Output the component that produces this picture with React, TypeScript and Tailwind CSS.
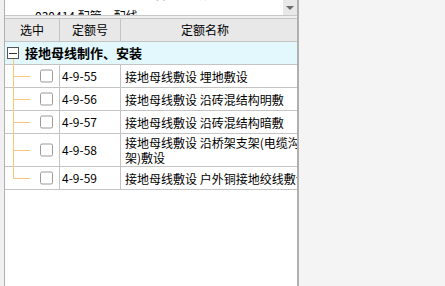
import React from "react";

const rows = [
  { code: "4-9-55", name: ["接地母线敷设 埋地敷设"] },
  { code: "4-9-56", name: ["接地母线敷设 沿砖混结构明敷"] },
  { code: "4-9-57", name: ["接地母线敷设 沿砖混结构暗敷"] },
  { code: "4-9-58", name: ["接地母线敷设 沿桥架支架(电缆沟", "架)敷设"] },
  { code: "4-9-59", name: ["接地母线敷设 户外铜接地绞线敷设"] },
];

function TreeCell({ last }: { last: boolean }) {
  return (
    <div className="relative w-[55px] shrink-0 border-r border-[#c4c4c4]">
      <div
        className={`absolute left-[8px] top-0 w-px bg-[#fcc77a] ${last ? "h-1/2" : "h-[calc(100%+1px)]"}`}
      />
      <div className="absolute left-[8px] top-1/2 h-px w-[17px] bg-[#fcc77a]" />
      <div className="absolute left-[35px] top-1/2 h-[13px] w-[13px] -translate-y-1/2 rounded-[2px] border border-[#9a9a9a] bg-white" />
    </div>
  );
}

export default function App() {
  return (
    <div
      className="flex h-[286px] w-[445px] overflow-hidden bg-[#f4f4f4] text-black"
      style={{ fontFamily: '"Noto Sans CJK SC", "Noto Sans", sans-serif' }}
    >
      <div className="w-[4px] shrink-0 bg-[#f0f0f0]" />
      <div className="flex w-[295px] shrink-0 flex-col border-l border-r-2 border-[#b0b0b0] bg-white">
        {/* tree view above, scrolled */}
        <div className="flex h-[16px] shrink-0 border-b border-[#c8c8c8]">
          <div className="relative flex-1 overflow-hidden text-[12px] leading-[14px]">
            <div className="absolute left-[92px] top-[-13px] font-bold">030400 配管配线安装</div>
            <div className="absolute left-[22px] top-[9px] flex gap-[4px]">
              <span className="text-[8px] text-[#888]">▸</span>
              <span>030414 配管、配线</span>
            </div>
          </div>
          <div className="flex w-[14px] items-center justify-center bg-[#e8e8e8]">
            <div className="h-0 w-0 border-x-[4px] border-t-[4px] border-x-transparent border-t-[#6b6b6b]" />
          </div>
        </div>
        <div className="h-[2px] shrink-0 bg-[#f0f0f0]" />
        {/* grid */}
        <div className="flex h-[24px] shrink-0 border-y border-[#c4c4c4] bg-[#e8e8e8] text-[12px]">
          <div className="flex w-[55px] items-center justify-center border-r border-[#c4c4c4]">选中</div>
          <div className="flex w-[61px] items-center justify-center border-r border-[#c4c4c4]">定额号</div>
          <div className="flex flex-1 items-center justify-center pr-[8px]">定额名称</div>
        </div>
        <div className="relative flex h-[23px] shrink-0 items-center border-b border-[#c4c4c4] bg-[#e2f8fd]">
          <div className="ml-[2px] flex h-[12px] w-[12px] items-center justify-center border border-[#555] bg-white">
            <div className="h-px w-[8px] bg-[#333]" />
          </div>
          <div className="absolute left-[8px] top-[17px] h-[6px] w-px bg-[#fcc77a]" />
          <span className="ml-[6px] text-[13px] font-bold">接地母线制作、安装</span>
        </div>
        {rows.map((r, i) => (
          <div
            key={r.code}
            className={`flex shrink-0 border-b border-[#c4c4c4] text-[12px] ${r.name.length > 1 ? "h-[33px]" : "h-[23px]"}`}
          >
            <TreeCell last={i === rows.length - 1} />
            <div className="flex w-[61px] shrink-0 items-center border-r border-[#c4c4c4] pl-[2px]">{r.code}</div>
            <div className="flex flex-1 flex-col justify-center overflow-hidden whitespace-nowrap pl-[4px] leading-[15px]">
              {r.name.map((n) => (
                <span key={n}>{n}</span>
              ))}
            </div>
          </div>
        ))}
        <div className="flex-1" />
      </div>
      <div className="flex-1" />
    </div>
  );
}
